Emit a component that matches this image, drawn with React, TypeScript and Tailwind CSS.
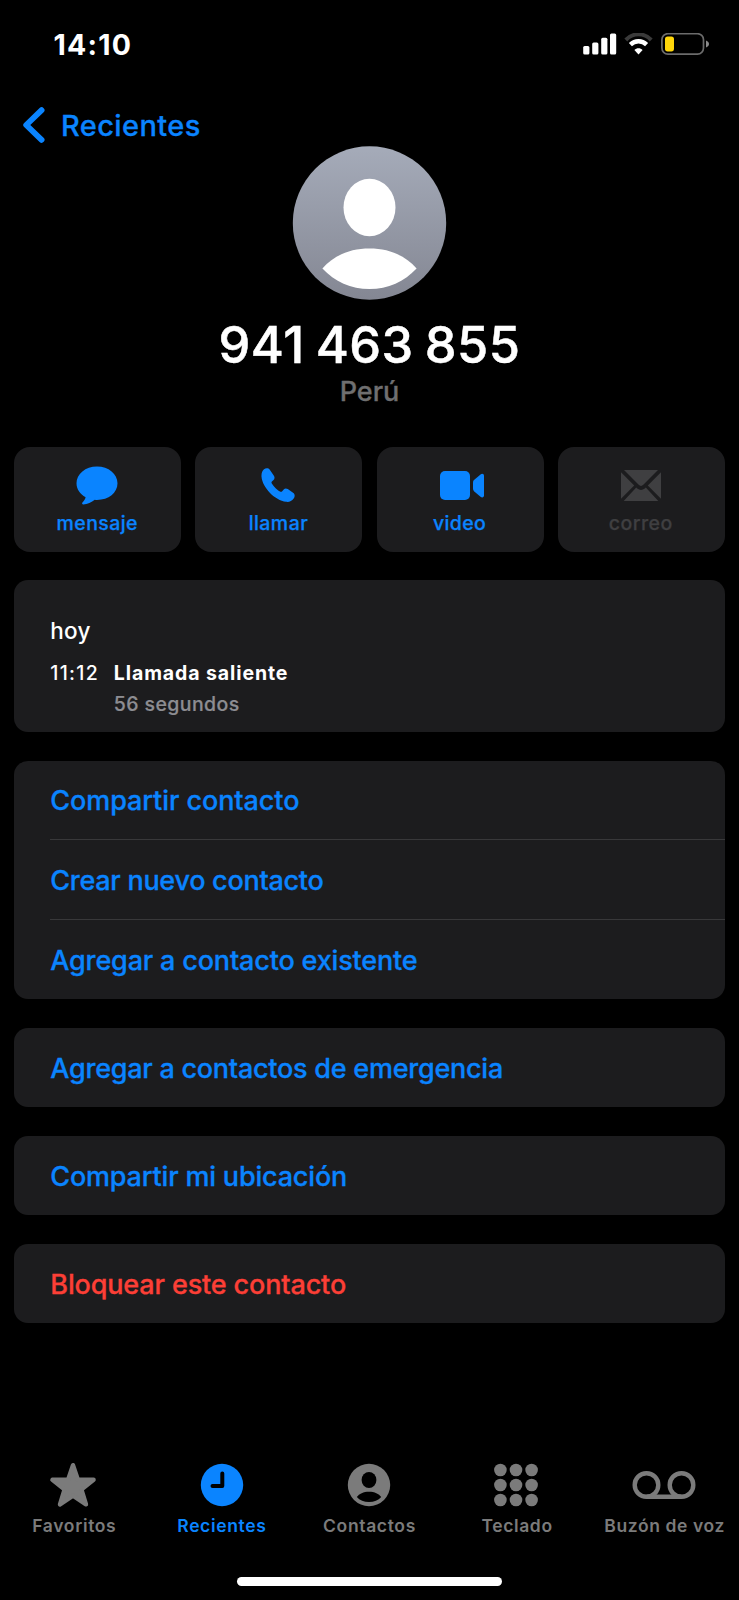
import type { ReactNode } from "react"

type Action = {
  label: string
  icon: ReactNode
  spacing: string
  disabled?: boolean
}

type Tab = {
  label: string
  icon: ReactNode
  spacing: string
  active?: boolean
}

const actions: Action[] = [
  {
    label: "mensaje",
    spacing: "tracking-[0.4px]",
    icon: (
      <svg width="42" height="39" viewBox="0 0 42 39" fill="currentColor">
        <path d="M21 0.5C32.6 0.5 41.5 8 41.5 17.3C41.5 26.7 32.6 34 21 34C20.3 34 19.5 33.9 18.8 33.8C15.5 36.2 11.5 38.2 7.3 38.4C6.1 38.4 5.7 37.2 6.6 36.2C7.9 34.9 9.2 33.2 9.6 31.2C4 28.3 0.5 23.2 0.5 17.3C0.5 8 9.4 0.5 21 0.5Z" />
      </svg>
    ),
  },
  {
    label: "llamar",
    spacing: "tracking-[0.45px]",
    icon: (
      <svg width="34" height="34" viewBox="0 0 34 34" fill="currentColor">
        <path d="M3 1.3C4.8 -0.1 7.3 -0.1 8.8 1.7L12.9 7.7C14 9.4 13.6 11.1 12.3 12.3L10.9 13.5C10.3 14.1 10.4 14.7 10.8 15.4C11.8 17.1 13.3 18.8 14.9 20.4C16.5 21.9 18 23 19.4 23.7C20.1 24 20.6 23.9 21.2 23.3L22.7 21.5C23.8 20.3 25.3 20.2 26.8 21.1L32.4 25C34.1 26.4 34 28.7 32.7 30.5C30.7 33.1 28.3 34.2 25.2 33.8C19.3 33 13.5 29.4 9 24.9C4.3 20.3 0.9 14.3 0.5 8.6C0.3 5.4 1.1 2.8 3 1.3Z" />
      </svg>
    ),
  },
  {
    label: "video",
    spacing: "tracking-[0.3px]",
    icon: (
      <svg className="ml-[5px]" width="44" height="29" viewBox="0 0 44 29" fill="currentColor">
        <rect width="30" height="29" rx="5" />
        <path d="M33 11.5C33 10.2 33.4 9.5 34.3 8.7L40.5 3.5C42.2 2.2 44 2.9 44 5V24.3C44 26.4 42.2 27.1 40.5 25.7L34.3 20.4C33.4 19.6 33 18.9 33 17.6Z" />
      </svg>
    ),
  },
  {
    label: "correo",
    spacing: "tracking-[0.45px]",
    disabled: true,
    icon: (
      <svg width="40" height="31" viewBox="0 0 40 31" fill="currentColor">
        <path d="M3 0H37L22.3 14.8C20.8 16.3 19.2 16.3 17.7 14.8Z" />
        <path d="M0 2.3L13.2 15.6L0 28.8Z" />
        <path d="M40 2.3L26.8 15.6L40 28.8Z" />
        <path d="M2.7 31L15.2 17.6L16.2 18.6C18.6 20.5 21.4 20.5 23.8 18.6L24.8 17.6L37.3 31Z" />
      </svg>
    ),
  },
]

const tabs: Tab[] = [
  {
    label: "Favoritos",
    spacing: "tracking-[0.65px]",
    icon: (
      <svg className="-mt-[1px] mr-[1px]" width="48" height="46" viewBox="0 0 48 46" fill="currentColor" stroke="currentColor" strokeWidth="4.4" strokeLinejoin="round">
        <path d="M24 3.2L28.9 17.8H44.6L32.4 27.4L37 42.4L24 33.6L11 42.4L15.6 27.4L3.4 17.8H19.1Z" />
      </svg>
    ),
  },
  {
    label: "Recientes",
    spacing: "tracking-[0.65px]",
    active: true,
    icon: (
      <svg className="ml-[1px]" width="44" height="44" viewBox="-0.5 -0.5 44 44">
        <circle cx="21.5" cy="21.5" r="21.2" fill="currentColor" />
        <path d="M21.8 10V22.6H12" fill="none" stroke="#000" strokeWidth="4" strokeLinecap="round" strokeLinejoin="round" />
      </svg>
    ),
  },
  {
    label: "Contactos",
    spacing: "tracking-[0.65px]",
    icon: (
      <svg width="44" height="44" viewBox="-0.5 -0.5 44 44">
        <circle cx="21.5" cy="21.5" r="21.2" fill="currentColor" />
        <ellipse cx="21.5" cy="16.5" rx="7.4" ry="8" fill="#000" />
        <path d="M9.3 33.5C11.6 30.2 16 28.2 21.5 28.2C27 28.2 31.4 30.2 33.7 33.5C30.8 36.7 26.5 38.6 21.5 38.6C16.5 38.6 12.2 36.7 9.3 33.5Z" fill="#000" />
      </svg>
    ),
  },
  {
    label: "Teclado",
    spacing: "tracking-[0.6px]",
    icon: (
      <svg className="mr-[1px]" width="44" height="44" viewBox="0 -0.5 44 44" fill="currentColor">
        {[6.5, 21.5, 36.5].map((cy) =>
          [6.4, 22, 37.6].map((cx) => <circle key={`${cx}-${cy}`} cx={cx} cy={cy} r="6.3" />)
        )}
      </svg>
    ),
  },
  {
    label: "Buzón de voz",
    spacing: "tracking-[0.6px]",
    icon: (
      <svg width="64" height="30" viewBox="0 0 64 30" fill="none" stroke="currentColor" strokeWidth="4.4">
        <circle cx="14.5" cy="15" r="11.8" />
        <circle cx="49.5" cy="15" r="11.8" />
        <path d="M14.5 26.8H49.5" />
      </svg>
    ),
  },
]

function StatusBar() {
  return (
    <div className="flex h-[88px] items-center justify-between pl-[53.5px] pr-[29.5px]">
      <span className="pt-[2px] text-[28.5px] font-bold leading-none tracking-[1.2px]">14:10</span>
      <div className="flex items-center">
        <svg width="34" height="22" viewBox="0 0 34 22" fill="currentColor">
          <rect x="0.2" y="13" width="6.2" height="8.4" rx="1.5" />
          <rect x="9.2" y="9.4" width="6.2" height="12" rx="1.5" />
          <rect x="18.2" y="4.8" width="6.2" height="16.6" rx="1.5" />
          <rect x="27" y="0.6" width="6.2" height="20.8" rx="1.5" />
        </svg>
        <svg className="ml-[7px]" width="29" height="22" viewBox="0 0 29 22" fill="none">
          <path d="M1.8 7C9 -0.6 20 -0.6 27.2 7" stroke="#3a3a3a" strokeWidth="4" />
          <path d="M6.4 11.6C11 7.2 18 7.2 22.6 11.6" stroke="#fff" strokeWidth="4.4" />
          <path d="M14.5 21.4L10.4 17.1C12.7 14.6 16.3 14.6 18.6 17.1Z" fill="#fff" />
        </svg>
        <svg className="ml-2" width="49" height="22" viewBox="0 0 49 22">
          <rect x="0.9" y="0.7" width="41.6" height="20.4" rx="6" fill="none" stroke="#6b6b6b" strokeWidth="1.7" />
          <rect x="4" y="3.4" width="9" height="15" rx="2.6" fill="#ffd60a" />
          <path d="M45 7.6C47 8.3 48 9.6 48 11.1C48 12.6 47 13.9 45 14.6Z" fill="#8a8a8a" />
        </svg>
      </div>
    </div>
  )
}

function Row({ label, spacing, danger }: { label: string; spacing: string; danger?: boolean }) {
  return (
    <button className={`flex h-full w-full items-center pt-[3px] text-left text-[27px] font-medium [-webkit-text-stroke:0.3px] ${spacing} ${danger ? "text-[#fc3f36]" : ""}`}>
      {label}
    </button>
  )
}

export default function App() {
  return (
    <div className="flex h-[1600px] w-[739px] flex-col overflow-hidden bg-black font-['Inter',sans-serif] text-white">
      <StatusBar />

      <header className="h-[58px] pt-[19px]">
        <button className="flex h-9 items-center pl-[22px] text-[#0a84ff]">
          <svg width="24" height="36" viewBox="0 0 24 36" fill="none" stroke="currentColor" strokeWidth="5.8" strokeLinecap="round" strokeLinejoin="round">
            <path d="M19.6 3.2L4.2 18L19.6 32.8" />
          </svg>
          <span className="ml-[15px] text-[29px] font-medium leading-none tracking-[0.4px] [-webkit-text-stroke:0.3px]">Recientes</span>
        </button>
      </header>

      <section className="flex flex-col items-center">
        <svg width="155" height="154" viewBox="-0.5 0 155 154">
          <defs>
            <linearGradient id="avatar" x1="0" y1="0" x2="0" y2="1">
              <stop offset="0" stopColor="#a5abb9" />
              <stop offset="1" stopColor="#848793" />
            </linearGradient>
          </defs>
          <circle cx="77" cy="77" r="76.7" fill="url(#avatar)" />
          <ellipse cx="77" cy="61.5" rx="26" ry="28.7" fill="#fff" />
          <path d="M29.9 122.5C41 109.5 57.5 102.6 77 102.6C96.5 102.6 113 109.5 124.1 122.5C112 135.5 95.5 143 77 143C58.5 143 42 135.5 29.9 122.5Z" fill="#fff" />
        </svg>
        <h1 className="mt-[17px] text-[50.5px] font-medium leading-[56px] tracking-[0.5px] [-webkit-text-stroke:0.5px] [word-spacing:-3px]">941 463 855</h1>
        <p className="mt-[1px] text-[27px] font-medium leading-[36px] text-[#6f6f70] [-webkit-text-stroke:0.3px]">Perú</p>
      </section>

      <section className="mx-[14.3px] mt-[37px] grid grid-cols-4 gap-[14.3px]">
        {actions.map((action) => (
          <button
            key={action.label}
            className={`flex h-[105px] flex-col items-center rounded-[16px] bg-[#1c1c1e] pr-[1px] pt-[18px] ${action.disabled ? "text-[#3f3f41]" : "text-[#0a84ff]"}`}
          >
            <span className="flex h-10 items-center">{action.icon}</span>
            <span className={`mt-[6px] text-[19.5px] font-medium leading-[24px] [-webkit-text-stroke:0.25px] ${action.spacing}`}>{action.label}</span>
          </button>
        ))}
      </section>

      <section className="mx-[14.3px] mt-7 h-[152px] rounded-[14px] bg-[#1c1c1e] pl-9 pt-9">
        <p className="pt-[1px] text-[22.5px] font-medium leading-[27px] tracking-[0.2px]">hoy</p>
        <div className="mt-[14px] flex text-[19.5px] leading-[31px]">
          <span className="w-[63.5px] font-medium tracking-[1.3px]">11:12</span>
          <div>
            <p className="font-bold tracking-[0.9px]">Llamada saliente</p>
            <p className="font-medium tracking-[0.4px] text-[#8d8d92] [-webkit-text-stroke:0.2px]">56 segundos</p>
          </div>
        </div>
      </section>

      <section className="mx-[14.3px] mt-[29px] flex flex-col gap-[29px] text-[#0a84ff]">
        <div className="h-[238px] rounded-[14px] bg-[#1c1c1e] pl-9">
          <div className="h-[78px]">
            <Row label="Compartir contacto" spacing="tracking-[-0.08px]" />
          </div>
          <div className="h-[81px] border-y border-[#38383a]">
            <Row label="Crear nuevo contacto" spacing="tracking-[-0.28px]" />
          </div>
          <div className="h-[79px]">
            <Row label="Agregar a contacto existente" spacing="tracking-[-0.17px]" />
          </div>
        </div>
        <div className="h-[79px] rounded-[14px] bg-[#1c1c1e] pl-9">
          <Row label="Agregar a contactos de emergencia" spacing="tracking-[-0.25px]" />
        </div>
        <div className="h-[79px] rounded-[14px] bg-[#1c1c1e] pl-9">
          <Row label="Compartir mi ubicación" spacing="tracking-[-0.18px]" />
        </div>
        <div className="h-[79px] rounded-[14px] bg-[#1c1c1e] pl-9">
          <Row label="Bloquear este contacto" spacing="tracking-[-0.14px]" danger />
        </div>
      </section>

      <nav className="mt-auto grid h-[140px] grid-cols-5 pr-[1px]">
        {tabs.map((tab) => (
          <button key={tab.label} className={`flex flex-col items-center ${tab.active ? "text-[#0a84ff]" : "text-[#7b7b7b]"}`}>
            <span className="flex h-[50px] items-center">{tab.icon}</span>
            <span className={`mt-[4px] whitespace-nowrap pl-[1px] text-[17.5px] font-semibold leading-[24px] ${tab.spacing}`}>{tab.label}</span>
          </button>
        ))}
      </nav>
      <div className="mx-auto mb-[14px] -mt-[23px] h-[9px] w-[265px] shrink-0 rounded-full bg-white" />
    </div>
  )
}
